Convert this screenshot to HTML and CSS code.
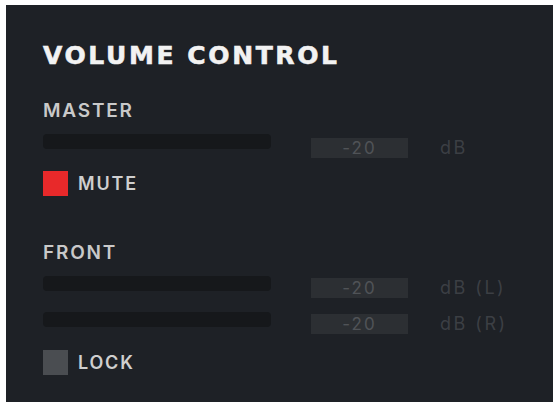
FILE: index.html
```html
<!DOCTYPE html>
<html lang="en">
<head>
  <meta charset="UTF-8">
  <title>Volume Control</title>
  <link rel="stylesheet" href="styles.css">
</head>
<body>

<div class="panel">
  <h2 class="title">VOLUME CONTROL</h2>

  <div class="group">
    <div class="label">MASTER</div>
    <div class="row">
      <div class="track"></div>
      <div class="value">-20</div>
      <div class="unit">dB</div>
    </div>
    <div class="check">
      <span class="box on"></span>
      <span class="check-label">MUTE</span>
    </div>
  </div>

  <div class="group front">
    <div class="label">FRONT</div>
    <div class="row">
      <div class="track"></div>
      <div class="value">-20</div>
      <div class="unit">dB (L)</div>
    </div>
    <div class="row">
      <div class="track"></div>
      <div class="value">-20</div>
      <div class="unit">dB (R)</div>
    </div>
    <div class="check">
      <span class="box"></span>
      <span class="check-label">LOCK</span>
    </div>
  </div>
</div>

</body>
</html>
```

FILE: styles.css
```css
body {
  margin: 0;
  background: #ffffff;
  font-family: Inter, "DejaVu Sans", sans-serif;
}

.panel {
  margin: 5px 6px;
  width: 547px;
  height: 397px;
  box-sizing: border-box;
  padding: 36px 37px 0;
  background: #1e2126;
}

.title {
  margin: 0;
  font-family: "DejaVu Sans", sans-serif;
  font-weight: bold;
  font-size: 25px;
  line-height: 30px;
  letter-spacing: 2.6px;
  color: #f2f2f2;
  -webkit-text-stroke: 0.6px #f2f2f2;
}

.group {
  margin-top: 29px;
}

.group.front {
  margin-top: 46px;
}

.label {
  font-size: 19px;
  font-weight: 600;
  line-height: 22px;
  letter-spacing: 1.8px;
  color: #c9c9c9;
}

.row {
  display: flex;
  align-items: flex-start;
  margin-top: 12px;
}

.row + .row {
  margin-top: 14px;
}

.track {
  width: 228px;
  height: 15px;
  border-radius: 4px;
  background: #16181b;
}

.value {
  width: 97px;
  height: 20px;
  margin: 4px 0 0 40px;
  background: #2c2f33;
  color: #505357;
  font-size: 17px;
  line-height: 20px;
  text-align: center;
  letter-spacing: 2px;
}

.front .value,
.front .unit {
  margin-top: 2px;
}

.unit {
  margin: 4px 0 0 32px;
  font-size: 18px;
  line-height: 20px;
  letter-spacing: 2.5px;
  color: #3c3f44;
}

.check {
  display: flex;
  align-items: center;
  margin-top: 13px;
}

.front .check {
  margin-top: 16px;
}

.box {
  width: 25px;
  height: 25px;
  background: #4a4d51;
}

.box.on {
  background: #e8292a;
}

.check-label {
  margin-left: 10px;
  font-size: 18px;
  font-weight: 600;
  letter-spacing: 1.8px;
  color: #cfcfcf;
}
```
